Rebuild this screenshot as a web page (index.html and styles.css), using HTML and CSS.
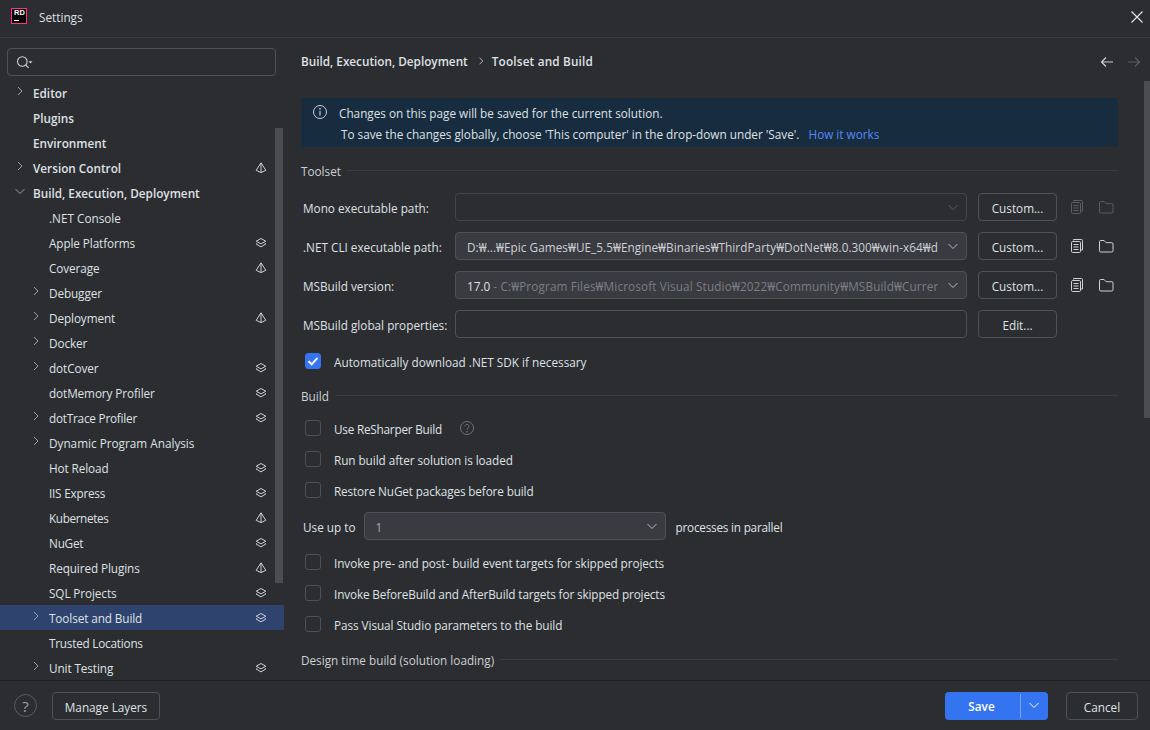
FILE: index.html
```html
<!DOCTYPE html>
<html lang="en">
<head>
<meta charset="utf-8">
<title>Settings</title>
<link rel="stylesheet" href="styles.css">
</head>
<body>
<svg class="defs" width="0" height="0">
  <symbol id="right" viewBox="0 0 16 16"><path d="M6 4 10 8 6 12" fill="none" stroke="currentColor"/></symbol>
  <symbol id="crumb" viewBox="0 0 16 16"><path d="M6.500 4.700 9.800 8 6.500 11.300" fill="none" stroke="currentColor"/></symbol>
  <symbol id="down" viewBox="0 0 16 16"><path d="M3.500 6 8 10.500 12.500 6" fill="none" stroke="currentColor"/></symbol>
  <symbol id="layers" viewBox="0 0 12 12"><path d="M6 1.500 10.800 4.200 6 6.900 1.200 4.200Z" fill="none" stroke="currentColor"/><path d="M2.200 6.400 1.200 7 6 9.900 10.800 7 9.800 6.400" fill="none" stroke="currentColor"/></symbol>
  <symbol id="shared" viewBox="0 0 12 12"><path d="M6 .8 10.800 8.300 6 10.600 1.200 8.300Z" fill="none" stroke="currentColor"/><path d="M6 1v9.400" fill="none" stroke="currentColor"/></symbol>
  <symbol id="copy" viewBox="0 0 16 16"><path d="M4.500 2.500V1.500h8a1 1 0 0 1 1 1v9.500h-2" fill="none" stroke="currentColor"/><rect x="2.500" y="3.500" width="9" height="11" rx="1.200" fill="none" stroke="currentColor"/><path d="M4.500 6.500h5M4.500 9h5M4.500 11.500h5" fill="none" stroke="currentColor"/></symbol>
  <symbol id="folder" viewBox="0 0 16 16"><path d="M1.500 3.700a1.200 1.200 0 0 1 1.200-1.200h3.400l2 2.200h5.700a1.200 1.200 0 0 1 1.200 1.200v6.900a1.200 1.200 0 0 1-1.200 1.200H2.700a1.200 1.200 0 0 1-1.200-1.200Z" fill="none" stroke="currentColor"/></symbol>
</svg>

<div class="window">
  <header class="titlebar">
    <span class="logo"><span class="logo-text">RD</span><span class="logo-bar"></span></span>
    <span class="title">Settings</span>
    <svg class="close" width="16" height="16" viewBox="0 0 16 16"><path d="M2.500 2.500 13.500 13.500M13.500 2.500 2.500 13.500" fill="none" stroke="currentColor" stroke-width="1.200"/></svg>
  </header>

  <div class="middle">
    <aside class="sidebar">
      <div class="search">
        <svg class="search-icon" width="20" height="16" viewBox="0 0 20 16"><circle cx="6.300" cy="7.500" r="4.800" fill="none" stroke="currentColor" stroke-width="1.100"/><path d="M9.800 11 12.600 13.800" fill="none" stroke="currentColor" stroke-width="1.100"/><path d="M12.500 7.300h4l-2 2.200Z" fill="currentColor"/></svg>
      </div>
      <nav class="tree">
        <div class="item top"><svg class="chev"><use href="#right"/></svg><span>Editor</span></div>
        <div class="item top"><span>Plugins</span></div>
        <div class="item top"><span>Environment</span></div>
        <div class="item top"><svg class="chev"><use href="#right"/></svg><span>Version Control</span><svg class="mark"><use href="#shared"/></svg></div>
        <div class="item top"><svg class="chev"><use href="#down"/></svg><span>Build, Execution, Deployment</span></div>
        <div class="item sub ls0"><span>.NET Console</span></div>
        <div class="item sub"><span>Apple Platforms</span><svg class="mark"><use href="#layers"/></svg></div>
        <div class="item sub"><span>Coverage</span><svg class="mark"><use href="#shared"/></svg></div>
        <div class="item sub"><svg class="chev"><use href="#right"/></svg><span>Debugger</span></div>
        <div class="item sub"><svg class="chev"><use href="#right"/></svg><span>Deployment</span><svg class="mark"><use href="#shared"/></svg></div>
        <div class="item sub"><svg class="chev"><use href="#right"/></svg><span>Docker</span></div>
        <div class="item sub"><svg class="chev"><use href="#right"/></svg><span>dotCover</span><svg class="mark"><use href="#layers"/></svg></div>
        <div class="item sub"><span>dotMemory Profiler</span><svg class="mark"><use href="#layers"/></svg></div>
        <div class="item sub ls3"><svg class="chev"><use href="#right"/></svg><span>dotTrace Profiler</span><svg class="mark"><use href="#layers"/></svg></div>
        <div class="item sub ls0"><svg class="chev"><use href="#right"/></svg><span>Dynamic Program Analysis</span></div>
        <div class="item sub"><span>Hot Reload</span><svg class="mark"><use href="#layers"/></svg></div>
        <div class="item sub ls3"><span>IIS Express</span><svg class="mark"><use href="#layers"/></svg></div>
        <div class="item sub ls4"><span>Kubernetes</span><svg class="mark"><use href="#shared"/></svg></div>
        <div class="item sub ls3"><span>NuGet</span><svg class="mark"><use href="#layers"/></svg></div>
        <div class="item sub"><span>Required Plugins</span><svg class="mark"><use href="#shared"/></svg></div>
        <div class="item sub"><span>SQL Projects</span><svg class="mark"><use href="#layers"/></svg></div>
        <div class="item sub selected"><svg class="chev"><use href="#right"/></svg><span>Toolset and Build</span><svg class="mark"><use href="#layers"/></svg></div>
        <div class="item sub ls3"><span>Trusted Locations</span></div>
        <div class="item sub"><svg class="chev"><use href="#right"/></svg><span>Unit Testing</span><svg class="mark"><use href="#layers"/></svg></div>
      </nav>
      <div class="side-thumb"></div>
    </aside>

    <main class="main">
      <div class="crumbs">
        <span class="crumb">Build, Execution, Deployment</span>
        <svg class="crumb-sep"><use href="#crumb"/></svg>
        <span class="crumb wide-crumb">Toolset and Build</span>
        <span class="spacer"></span>
        <svg class="nav-arrow" width="16" height="16" viewBox="0 0 16 16"><path d="M14 8H2.500M7 3.500 2.500 8 7 12.500" fill="none" stroke="currentColor" stroke-width="1.200"/></svg>
        <svg class="nav-arrow off" width="16" height="16" viewBox="0 0 16 16"><path d="M2 8h11.500M9 3.500 13.500 8 9 12.500" fill="none" stroke="currentColor" stroke-width="1.200"/></svg>
      </div>

      <div class="banner">
        <svg class="info" width="16" height="16" viewBox="0 0 16 16"><circle cx="8" cy="8" r="6.500" fill="none" stroke="currentColor"/><path d="M8 7v4.500" fill="none" stroke="currentColor" stroke-width="1.200"/><circle cx="8" cy="4.800" r=".9" fill="currentColor"/></svg>
        <div class="banner-text">
          <div>Changes on this page will be saved for the current solution.</div>
          <div class="banner-second">To save the changes globally, choose 'This computer' in the drop-down under 'Save'.<a class="link">How it works</a></div>
        </div>
      </div>

      <div class="section-title"><span>Toolset</span><i class="rule"></i></div>

      <div class="form">
        <div class="form-row">
          <label class="form-label">Mono executable path:</label>
          <div class="combo disabled"><svg class="combo-chev"><use href="#down"/></svg></div>
          <button class="btn wide">Custom...</button>
          <svg class="tool off"><use href="#copy"/></svg>
          <svg class="tool off"><use href="#folder"/></svg>
        </div>
        <div class="form-row">
          <label class="form-label">.NET CLI executable path:</label>
          <div class="combo"><span class="value path">D:₩...₩Epic Games₩UE_5.5₩Engine₩Binaries₩ThirdParty₩DotNet₩8.0.300₩win-x64₩d</span><svg class="combo-chev"><use href="#down"/></svg></div>
          <button class="btn wide">Custom...</button>
          <svg class="tool"><use href="#copy"/></svg>
          <svg class="tool"><use href="#folder"/></svg>
        </div>
        <div class="form-row">
          <label class="form-label">MSBuild version:</label>
          <div class="combo"><span class="value"><b class="version">17.0</b> <span class="dim">- C:₩Program Files₩Microsoft Visual Studio₩2022₩Community₩MSBuild₩Currer</span></span><svg class="combo-chev"><use href="#down"/></svg></div>
          <button class="btn wide">Custom...</button>
          <svg class="tool"><use href="#copy"/></svg>
          <svg class="tool"><use href="#folder"/></svg>
        </div>
        <div class="form-row">
          <label class="form-label">MSBuild global properties:</label>
          <div class="combo plain"></div>
          <button class="btn wide">Edit...</button>
        </div>
      </div>

      <div class="check-row first"><span class="check on"><svg width="16" height="16" viewBox="0 0 16 16"><path d="M3.500 8.300 6.700 11.300 12.500 4.800" fill="none" stroke="#fff" stroke-width="2"/></svg></span><span>Automatically download .NET SDK if necessary</span></div>

      <div class="section-title build"><span>Build</span><i class="rule"></i></div>

      <div class="stack">
        <div class="check-row"><span class="check"></span><span class="ls3">Use ReSharper Build</span>
          <svg class="hint" width="16" height="16" viewBox="0 0 16 16"><circle cx="8" cy="8" r="6.500" fill="none" stroke="currentColor"/><path d="M6 6.400a2 2 0 1 1 3.200 1.600c-.8.600-1.200 1-1.200 1.800" fill="none" stroke="currentColor"/><circle cx="8" cy="11.700" r=".8" fill="currentColor"/></svg>
        </div>
        <div class="check-row"><span class="check"></span><span class="ls1">Run build after solution is loaded</span></div>
        <div class="check-row"><span class="check"></span><span class="ls2">Restore NuGet packages before build</span></div>
        <div class="parallel">
          <span class="plain-text">Use up to</span>
          <div class="combo small"><span class="value num">1</span><svg class="combo-chev"><use href="#down"/></svg></div>
          <span class="plain-text after ls3">processes in parallel</span>
        </div>
        <div class="check-row"><span class="check"></span><span class="ls1">Invoke pre- and post- build event targets for skipped projects</span></div>
        <div class="check-row"><span class="check"></span><span class="ls2">Invoke BeforeBuild and AfterBuild targets for skipped projects</span></div>
        <div class="check-row"><span class="check"></span><span class="ls1">Pass Visual Studio parameters to the build</span></div>
      </div>

      <div class="section-title design"><span>Design time build (solution loading)</span><i class="rule"></i></div>
      <div class="main-thumb"></div>
    </main>
  </div>

  <footer class="footer">
    <span class="help">?</span>
    <button class="btn layers">Manage Layers</button>
    <span class="spacer"></span>
    <div class="save">
      <span class="save-main">Save</span>
      <span class="save-split"></span>
      <svg class="save-chev"><use href="#down"/></svg>
    </div>
    <button class="btn cancel">Cancel</button>
  </footer>
</div>
</body>
</html>
```

FILE: styles.css
```css
* { box-sizing: border-box; }
html, body { margin: 0; height: 100%; }
body {
  background: #2b2d30;
  color: #dfe1e5;
  font: 11.75px/20px "Open Sans", "Noto Sans", "Liberation Sans", sans-serif;
  overflow: hidden;
}
.defs { display: block; height: 0; }
.window { display: flex; flex-direction: column; height: 730px; }
.titlebar {
  display: flex; align-items: center;
  height: 38px; flex: none;
  padding: 0 5px 3px 11px;
  border-bottom: 1px solid #393b40;
}
.logo {
  width: 16px; height: 16px; flex: none; margin-top: -2px;
  background: #000; border: 1px solid #ff318c;
  display: block;
}
.logo-text {
  display: block; font: 700 7.5px/8px "Liberation Sans", sans-serif; color: #fff;
  padding-left: 2px;
}
.logo-bar { display: block; width: 5px; height: 1px; background: #fff; margin: 3px 0 0 2px; }
.title { margin-left: 12px; flex: 1; }
.close { color: #dfe1e5; }

.middle { display: flex; flex: 1; min-height: 0; }
.sidebar {
  position: relative; width: 284px; flex: none;
  overflow: hidden; padding-top: 10px;
}
.search {
  margin: 0 8px 0 7px; height: 28px;
  border: 1px solid #4e5157; border-radius: 4px;
  display: flex; align-items: center; padding-left: 8px;
  color: #ced0d6;
}
.search-icon { display: block; }
.tree { margin-top: 4px; }
.item { position: relative; display: flex; align-items: center; height: 25px; padding-right: 16px; }
.item > span { flex: 1; }
.top { padding-left: 33px; font-weight: 600; }
.sub { padding-left: 49px; letter-spacing: -.1px; }
.selected { background: #2e436e; }
.chev { position: absolute; top: 3px; width: 16px; height: 16px; color: #9da0a8; }
.top .chev { left: 12px; }
.sub .chev { left: 28px; }
.mark { width: 12px; height: 12px; flex: none; margin-right: 1px; color: #ced0d6; }
.side-thumb { position: absolute; left: 275px; top: 90px; width: 8px; height: 455px; background: #4c4d50; }
.ls0 { letter-spacing: 0; }
.ls1 { letter-spacing: -.06px; }
.ls2 { letter-spacing: -.13px; }
.ls3 { letter-spacing: -.22px; }
.ls4 { letter-spacing: -.38px; }

.main { position: relative; flex: 1; min-width: 0; overflow: hidden; padding: 0 32px 0 17px; }
.crumbs { display: flex; align-items: center; height: 46px; margin-right: -24px; font-weight: 600; }
.crumb-sep { width: 16px; height: 16px; margin: 0 3px 0 5px; color: #b4b8bf; }
.wide-crumb { letter-spacing: .18px; }
.spacer { flex: 1; }
.nav-arrow { color: #ced0d6; margin: 2px 0 0 11px; }
.nav-arrow.off { color: #5a5d63; }

.banner {
  display: flex; margin-top: 14px; height: 49px;
  background: #182c3f; padding: 5px 0 0 11px;
}
.info { color: #ced0d6; margin-top: 1px; flex: none; }
.banner-text { margin-left: 11px; line-height: 21px; }
.banner-second { margin-left: 2px; }
.link { color: #548af7; margin-left: 9px; }

.section-title { display: flex; align-items: center; height: 20px; margin-top: 14px; color: #ced0d6; }
.rule { flex: 1; height: 1px; background: #393b40; margin: 0 0 2px 6px; }

.form { display: flex; flex-direction: column; gap: 11px; margin-top: 12px; }
.form-row { display: flex; align-items: center; height: 28px; }
.form-label { width: 154px; padding: 1px 0 0 2px; flex: none; }
.combo {
  position: relative; display: flex; align-items: center;
  width: 512px; height: 28px; flex: none; padding: 0 28px 0 11px;
  background: #393b40; border: 1px solid #4e5157; border-radius: 4px;
  overflow: hidden;
}
.combo.disabled { background: transparent; border-color: #43454a; }
.combo.disabled .combo-chev { color: #5a5d63; }
.combo.plain { background: transparent; }
.combo.small { width: 302px; }
.value { white-space: nowrap; overflow: hidden; flex: 1; color: #ced0d6; padding-top: 1px; }
.path { letter-spacing: .05px; }
.version { font-weight: 400; color: #dfe1e5; }
.num { color: #a8adbd; }
.dim { color: #7a7e85; letter-spacing: .13px; }
.combo-chev { position: absolute; right: 5px; top: 5px; width: 16px; height: 16px; color: #b4b8bf; }
.btn {
  height: 28px; background: transparent; color: #dfe1e5;
  border: 1px solid #4e5157; border-radius: 4px;
  font: 11.75px/20px "Open Sans", "Noto Sans", "Liberation Sans", sans-serif;
  padding: 1px 0 0;
}
.wide { width: 79px; margin-left: 11px; flex: none; }
.tool { width: 16px; height: 16px; flex: none; margin: 0 0 0 13px; color: #ced0d6; }
.wide + .tool { margin-left: 12px; }
.tool.off { color: #5a5d63; }

.check-row { display: flex; align-items: center; height: 20px; }
.check-row.first { margin-top: 14px; }
.check {
  width: 16px; height: 16px; margin: -2px 13px 0 4px; flex: none;
  border: 1px solid #4e5157; border-radius: 3px;
}
.check.on { background: #3574f0; border-color: #3574f0; }
.check.on svg { display: block; margin: -1px; }
.hint { color: #6f737a; margin: -2px 0 0 17px; }
.stack { display: flex; flex-direction: column; gap: 11px; margin-top: 13px; }
.parallel { display: flex; align-items: center; gap: 8px; height: 28px; padding-left: 2px; margin-bottom: 2px; }
.plain-text { padding-top: 2px; }
.after { margin-left: 2px; }
.section-title.build { margin-top: 14px; }
.section-title.design { margin-top: 15px; }
.main-thumb { position: absolute; right: 0; top: 43px; width: 6px; height: 337px; background: #4c4d50; }

.footer {
  display: flex; align-items: center; height: 50px; flex: none;
  border-top: 1px solid #1e1f22; padding: 0 12px 0 14px;
}
.footer .btn { padding-top: 2px; }
.help {
  width: 23px; height: 23px; border: 1px solid #5a5d63; border-radius: 50%;
  display: flex; align-items: center; justify-content: center;
  font-size: 15px; color: #9da0a8;
}
.layers { width: 108px; margin-left: 15px; }
.save {
  display: flex; align-items: center;
  width: 103px; height: 28px; background: #3574f0; border-radius: 4px; color: #fff; font-weight: 600;
}
.save-main { width: 75px; text-align: center; padding: 1px 2px 0 0; }
.save-split { width: 1px; height: 24px; background: #7da5f5; }
.save-chev { width: 16px; height: 16px; margin-left: 5px; margin-top: -2px; color: #fff; }
.cancel { width: 72px; margin-left: 18px; }
```
